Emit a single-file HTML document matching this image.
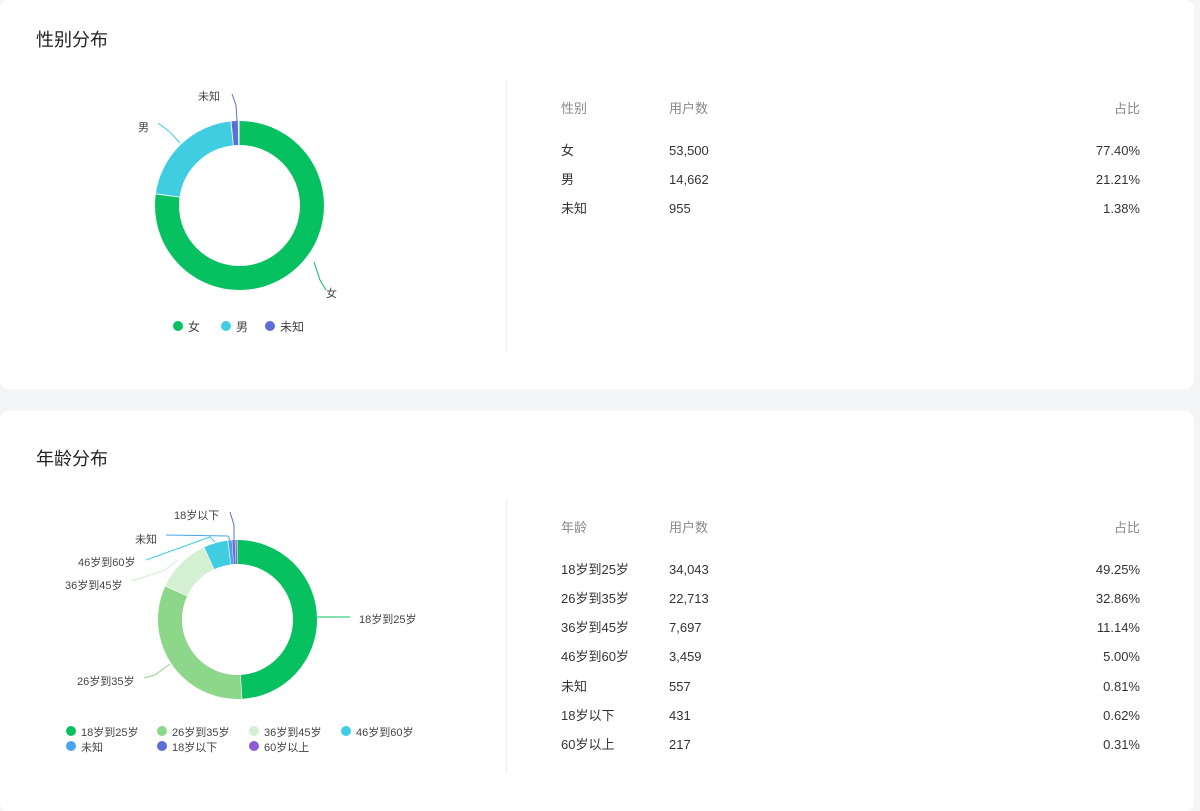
<!DOCTYPE html>
<html><head><meta charset="utf-8"><style>
*{margin:0;padding:0;box-sizing:border-box}
body{width:1200px;height:796px;background:#f4f5f7;font-family:"Liberation Sans","Noto Sans CJK SC",sans-serif;position:relative;overflow:hidden;color:#333}
.card{position:absolute;left:0;width:1194px;background:#fff;border-radius:8px}
.title{position:absolute;left:36px;font-size:18px;color:#222}
.div{position:absolute;left:506px;width:1px;background:#eee}
.t{position:absolute;font-size:13px;white-space:nowrap;line-height:18px}
.h{color:#888}
.r{text-align:right;width:120px}
svg{position:absolute;left:0;top:0}
svg text{font-family:"Liberation Sans","Noto Sans CJK SC",sans-serif;font-size:11px;fill:#444}
</style></head><body>
<div class="card" style="top:0;height:389px">
<div class="title" style="top:26px">性别分布</div>
<div class="div" style="top:80px;height:272px"></div>
</div>
<div class="card" style="top:411px;height:400px">
<div class="title" style="top:34px">年龄分布</div>
<div class="div" style="top:90px;height:272px"></div>
</div>

<div class="t h" style="left:561px;top:100px">性别</div>
<div class="t h" style="left:669px;top:100px">用户数</div>
<div class="t h r" style="left:1020px;top:100px">占比</div>
<div class="t" style="left:561px;top:142px">女</div><div class="t" style="left:669px;top:142px">53,500</div><div class="t r" style="left:1020px;top:142px">77.40%</div>
<div class="t" style="left:561px;top:171px">男</div><div class="t" style="left:669px;top:171px">14,662</div><div class="t r" style="left:1020px;top:171px">21.21%</div>
<div class="t" style="left:561px;top:200px">未知</div><div class="t" style="left:669px;top:200px">955</div><div class="t r" style="left:1020px;top:200px">1.38%</div>

<div class="t h" style="left:561px;top:519px">年龄</div>
<div class="t h" style="left:669px;top:519px">用户数</div>
<div class="t h r" style="left:1020px;top:519px">占比</div>
<div class="t" style="left:561px;top:561px">18岁到25岁</div><div class="t" style="left:669px;top:561px">34,043</div><div class="t r" style="left:1020px;top:561px">49.25%</div>
<div class="t" style="left:561px;top:590px">26岁到35岁</div><div class="t" style="left:669px;top:590px">22,713</div><div class="t r" style="left:1020px;top:590px">32.86%</div>
<div class="t" style="left:561px;top:619px">36岁到45岁</div><div class="t" style="left:669px;top:619px">7,697</div><div class="t r" style="left:1020px;top:619px">11.14%</div>
<div class="t" style="left:561px;top:648px">46岁到60岁</div><div class="t" style="left:669px;top:648px">3,459</div><div class="t r" style="left:1020px;top:648px">5.00%</div>
<div class="t" style="left:561px;top:678px">未知</div><div class="t" style="left:669px;top:678px">557</div><div class="t r" style="left:1020px;top:678px">0.81%</div>
<div class="t" style="left:561px;top:707px">18岁以下</div><div class="t" style="left:669px;top:707px">431</div><div class="t r" style="left:1020px;top:707px">0.62%</div>
<div class="t" style="left:561px;top:736px">60岁以上</div><div class="t" style="left:669px;top:736px">217</div><div class="t r" style="left:1020px;top:736px">0.31%</div>

<svg width="1200" height="796" viewBox="0 0 1200 796">
<g transform="rotate(-90 239.5 205.5)" fill="none" stroke-width="24">
<circle cx="239.5" cy="205.5" r="72.5" pathLength="100" stroke="#07c160" stroke-dasharray="77.2 100" stroke-dashoffset="0"/>
<circle cx="239.5" cy="205.5" r="72.5" pathLength="100" stroke="#40cde2" stroke-dasharray="21.0 100" stroke-dashoffset="-77.4"/>
<circle cx="239.5" cy="205.5" r="72.5" pathLength="100" stroke="#5b6fd5" stroke-dasharray="1.2 100" stroke-dashoffset="-98.6"/>
</g>
<polyline points="314,262 320,280 326,290" fill="none" stroke="#07c160" stroke-width="1"/>
<text x="326" y="297">女</text>
<polyline points="180,143 170,132 158,123" fill="none" stroke="#40cde2" stroke-width="1"/>
<text x="138" y="131">男</text>
<polyline points="237,121 236,105 232,94" fill="none" stroke="#5b6fd5" stroke-width="1"/>
<text x="198" y="100">未知</text>
<circle cx="178" cy="326" r="5" fill="#07c160"/><text x="188" y="331" style="font-size:12px">女</text>
<circle cx="226" cy="326" r="5" fill="#40cde2"/><text x="236" y="331" style="font-size:12px">男</text>
<circle cx="270" cy="326" r="5" fill="#5b6fd5"/><text x="280" y="331" style="font-size:12px">未知</text>

<g transform="rotate(-90 237.5 619.5)" fill="none" stroke-width="24">
<circle cx="237.5" cy="619.5" r="67.5" pathLength="100" stroke="#07c160" stroke-dasharray="49.1 100" stroke-dashoffset="0"/>
<circle cx="237.5" cy="619.5" r="67.5" pathLength="100" stroke="#8dd78a" stroke-dasharray="32.7 100" stroke-dashoffset="-49.25"/>
<circle cx="237.5" cy="619.5" r="67.5" pathLength="100" stroke="#d3f0d3" stroke-dasharray="11.0 100" stroke-dashoffset="-82.11"/>
<circle cx="237.5" cy="619.5" r="67.5" pathLength="100" stroke="#40cde2" stroke-dasharray="4.85 100" stroke-dashoffset="-93.25"/>
<circle cx="237.5" cy="619.5" r="67.5" pathLength="100" stroke="#4ba3ec" stroke-dasharray="0.7 100" stroke-dashoffset="-98.25"/>
<circle cx="237.5" cy="619.5" r="67.5" pathLength="100" stroke="#5b6fd5" stroke-dasharray="0.5 100" stroke-dashoffset="-99.06"/>
<circle cx="237.5" cy="619.5" r="67.5" pathLength="100" stroke="#8e5ad6" stroke-dasharray="0.3 100" stroke-dashoffset="-99.68"/>
</g>
<polyline points="317,617 350,617" fill="none" stroke="#07c160" stroke-width="1"/>
<text x="359" y="623">18岁到25岁</text>
<polyline points="170,664 155,675 144,678" fill="none" stroke="#8dd78a" stroke-width="1"/>
<text x="77" y="685">26岁到35岁</text>
<polyline points="178,560 165,570 132,581" fill="none" stroke="#d3f0d3" stroke-width="1"/>
<text x="65" y="589">36岁到45岁</text>
<polyline points="215,542 210,537 146,560" fill="none" stroke="#40cde2" stroke-width="1"/>
<text x="78" y="566">46岁到60岁</text>
<polyline points="230,540 228,536 166,535" fill="none" stroke="#4ba3ec" stroke-width="1"/>
<text x="135" y="543">未知</text>
<polyline points="234,540 234,525 230,512" fill="none" stroke="#5b6fd5" stroke-width="1"/>
<text x="174" y="519">18岁以下</text>
<circle cx="71" cy="731" r="5" fill="#07c160"/><text x="81" y="736">18岁到25岁</text>
<circle cx="162" cy="731" r="5" fill="#8dd78a"/><text x="172" y="736">26岁到35岁</text>
<circle cx="254" cy="731" r="5" fill="#d3f0d3"/><text x="264" y="736">36岁到45岁</text>
<circle cx="346" cy="731" r="5" fill="#40cde2"/><text x="356" y="736">46岁到60岁</text>
<circle cx="71" cy="746" r="5" fill="#4ba3ec"/><text x="81" y="751">未知</text>
<circle cx="162" cy="746" r="5" fill="#5b6fd5"/><text x="172" y="751">18岁以下</text>
<circle cx="254" cy="746" r="5" fill="#8e5ad6"/><text x="264" y="751">60岁以上</text>
</svg>
</body></html>
